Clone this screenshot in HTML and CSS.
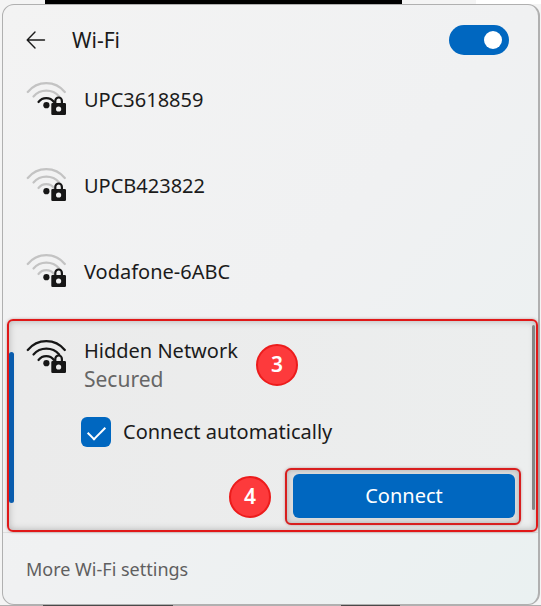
FILE: index.html
```html
<!DOCTYPE html>
<html lang="en">
<head>
  <meta charset="UTF-8">
  <title>Wi-Fi</title>
  <meta name="viewport" content="width=device-width, initial-scale=1.0">
  <link rel="stylesheet" href="styles.css">
</head>
<body>
  <div class="backdrop"><div class="backdrop-window"></div></div>

  <main class="panel">
    <header class="panel-header">
      <button class="back" type="button" aria-label="Back">
        <svg width="20" height="18" viewBox="0 0 20 18" fill="none" stroke="#1b1b1b" stroke-width="1.4" stroke-linecap="round" stroke-linejoin="round"><path d="M18.5 9H1.5M9 1L1.2 9L9 17"/></svg>
      </button>
      <h1>Wi-Fi</h1>
      <input class="toggle" type="checkbox" role="switch" aria-label="Wi-Fi" checked>
    </header>

    <ul class="networks">
      <li class="network">
        <svg class="signal level-1" viewBox="0 0 40 36"><use href="#wifi"/></svg>
        <span>UPC3618859</span>
      </li>
      <li class="network">
        <svg class="signal" viewBox="0 0 40 36"><use href="#wifi"/></svg>
        <span>UPCB423822</span>
      </li>
      <li class="network">
        <svg class="signal" viewBox="0 0 40 36"><use href="#wifi"/></svg>
        <span>Vodafone-6ABC</span>
      </li>
    </ul>

    <section class="selected">
      <div class="selected-info">
        <svg class="signal level-3" viewBox="0 0 40 36"><use href="#wifi"/></svg>
        <div>
          <h2>Hidden Network</h2>
          <p>Secured</p>
        </div>
        <span class="step">3</span>
      </div>
      <div class="auto">
        <input type="checkbox" id="auto" checked>
        <label for="auto">Connect automatically</label>
      </div>
      <div class="actions">
        <span class="step">4</span>
        <div class="callout">
          <button class="connect" type="button">Connect</button>
        </div>
      </div>
      <div class="scrollbar"></div>
    </section>

    <footer class="panel-footer">
      <a href="#">More Wi-Fi settings</a>
    </footer>
  </main>

  <div class="backdrop-bottom"></div>

  <svg width="0" height="0" class="defs">
    <symbol id="wifi" viewBox="0 0 40 36">
      <g fill="none" stroke-width="2.2" stroke-linecap="round">
        <path class="arc-3" d="M1.8 12A23.6 23.6 0 0 1 38.8 12"/>
        <path class="arc-2" d="M7.5 16.5A17 17 0 0 1 33.2 16.5"/>
        <path class="arc-1" d="M12.5 22A9.8 9.8 0 0 1 28 22"/>
      </g>
      <circle cx="20.4" cy="25.2" r="3.1" fill="#161616"/>
      <path d="M29.3 24V21A3.3 3.5 0 0 1 35.9 21V24" fill="none" stroke="#161616" stroke-width="2.2"/>
      <path fill="#161616" fill-rule="evenodd" d="M26.5 23H38.8Q40 23 40 24.2V33.8Q40 35 38.8 35H26.5Q25.3 35 25.3 33.8V24.2Q25.3 23 26.5 23ZM32.6 26.4A2.6 2.6 0 1 0 32.6 31.6A2.6 2.6 0 1 0 32.6 26.4Z"/>
    </symbol>
  </svg>
</body>
</html>
```
FILE: styles.css
```css
* {
  box-sizing: border-box;
}
body {
  margin: 0;
  min-height: 100vh;
  display: flex;
  flex-direction: column;
  background: #f4f4f4;
  font-family: "Noto Sans", "Open Sans", sans-serif;
  font-size: 20px;
  line-height: 28px;
  color: #1b1b1b;
}
h1, h2, p, ul {
  margin: 0;
  padding: 0;
  font-size: 20px;
  font-weight: normal;
}
.backdrop {
  height: 4px;
  padding-left: 45px;
  background: linear-gradient(to right, #f4f4f4 88%, #fff 88%);
}
.backdrop-window {
  width: 72%;
  height: 4px;
  background: #000;
}
.backdrop-bottom {
  height: 1px;
  background: linear-gradient(to right, #b0b0b0 8%, #4a4a4a 8% 32%, #b0b0b0 32% 63%, #4a4a4a 63% 74%, #b0b0b0 74%);
}
.defs {
  position: absolute;
}
.panel {
  flex: 1;
  display: flex;
  flex-direction: column;
  margin: 0 1px 0 2px;
  border: 1px solid #b0b0b0;
  border-right-width: 2px;
  border-radius: 12px;
  background: linear-gradient(to bottom right, #f3f3f3, #f0f1f2 50%, #eaf1f1);
}

/* header */
.panel-header {
  display: flex;
  align-items: center;
  padding: 18px 29px 0 23px;
  height: 52px;
}
h1 {
  font-size: 21px;
}
.back {
  display: flex;
  padding: 0;
  margin-right: 26px;
  border: 0;
  background: none;
}
.toggle {
  appearance: none;
  display: flex;
  align-items: center;
  justify-content: flex-end;
  width: 60px;
  height: 30px;
  margin: 0 0 0 auto;
  padding: 7px;
  border-radius: 15px;
  background: #0067c0;
}
.toggle::before {
  content: "";
  width: 18px;
  height: 18px;
  border-radius: 50%;
  background: #fff;
}

/* network list */
.networks {
  list-style: none;
}
.network {
  display: flex;
  align-items: center;
  gap: 18px;
  height: 86px;
  padding-left: 23px;
}
.signal {
  flex: none;
  width: 40px;
  height: 36px;
  margin-bottom: 4px;
  --on: #161616;
  --off: #c3c3c3;
}
.arc-1 {
  stroke: var(--arc-1, var(--off));
}
.arc-2,
.arc-3 {
  stroke: var(--arc-outer, var(--off));
}
.level-1 {
  --arc-1: var(--on);
}
.level-3 {
  --arc-1: var(--on);
  --arc-outer: var(--on);
}

/* selected network */
.selected {
  position: relative;
  margin: 4px 0 0 4px;
  padding: 14px 15px 5px 17px;
  border: 2px solid #e01818;
  border-radius: 6px;
  background: linear-gradient(to right, #ebebeb, #eceeee);
  box-shadow: 0 0 3px rgba(120, 40, 40, 0.4), inset 0 0 7px rgba(0, 0, 0, 0.25);
}
.selected::before {
  content: "";
  position: absolute;
  left: 0;
  top: 31px;
  bottom: 27px;
  width: 5px;
  border-radius: 3px;
  background: #0a5cad;
}
.selected-info {
  display: flex;
  align-items: center;
  gap: 18px;
  height: 60px;
}
.selected-info .signal {
  align-self: flex-start;
  margin-top: 3px;
}
.selected p {
  color: #666;
  font-size: 21px;
}
.step {
  flex: none;
  width: 42px;
  height: 42px;
  border: 2px solid #ec1c1c;
  border-radius: 50%;
  background: #fd3a3c;
  color: #fff;
  font-size: 21px;
  font-weight: 600;
  line-height: 36px;
  text-align: center;
}
.auto {
  display: flex;
  align-items: center;
  gap: 12px;
  margin-top: 22px;
  padding-left: 55px;
}
.auto input {
  appearance: none;
  display: grid;
  place-items: center;
  width: 30px;
  height: 30px;
  margin: 0;
  border-radius: 6px;
  background: #0067c0;
}
.auto input::before {
  content: "";
  width: 15px;
  height: 8px;
  margin-bottom: 3px;
  border: solid #fff;
  border-width: 0 0 2px 2px;
  transform: rotate(-45deg);
}
.actions {
  display: flex;
  align-items: center;
  justify-content: flex-end;
  gap: 14px;
  margin-top: 21px;
}
.callout {
  flex: 0 1 236px;
  padding: 4px 4px 5px 6px;
  border: 2px solid #d81e1e;
  border-radius: 6px;
  background: #dcdcdc;
  box-shadow: 0 0 3px rgba(120, 40, 40, 0.4), inset 0 0 5px rgba(0, 0, 0, 0.2);
}
.connect {
  display: block;
  width: 100%;
  height: 44px;
  border: 0;
  border-radius: 6px;
  background: #0067c0;
  color: #fff;
  font: inherit;
}
.scrollbar {
  position: absolute;
  right: 1px;
  top: 4px;
  bottom: 20px;
  width: 3px;
  border-radius: 2px;
  background: #858585;
}

/* footer */
.panel-footer {
  flex: 1;
  display: flex;
  align-items: center;
  padding: 0 23px;
  border-top: 1px solid #dedede;
}
.panel-footer a {
  color: #5f5f5f;
  font-size: 18px;
  text-decoration: none;
}
```
